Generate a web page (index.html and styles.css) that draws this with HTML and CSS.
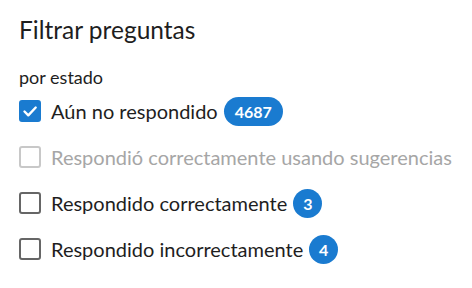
FILE: index.html
```html
<!DOCTYPE html>
<html lang="es">
<head>
<meta charset="utf-8">
<link rel="stylesheet" href="styles.css">
</head>
<body>
<div class="panel">
  <h2 class="title">Filtrar preguntas</h2>
  <div class="group-label">por estado</div>
  <ul class="options">
    <li class="option">
      <span class="box checked"><svg viewBox="0 0 22 22" width="22" height="22"><path d="M5.5 11.5l3.8 3.8 7.4-7.8" fill="none" stroke="#fff" stroke-width="2.4" stroke-linecap="round" stroke-linejoin="round"/></svg></span>
      <span class="label">Aún no respondido</span>
      <span class="badge">4687</span>
    </li>
    <li class="option disabled">
      <span class="box"></span>
      <span class="label">Respondió correctamente usando sugerencias</span>
    </li>
    <li class="option">
      <span class="box"></span>
      <span class="label">Respondido correctamente</span>
      <span class="badge round">3</span>
    </li>
    <li class="option">
      <span class="box"></span>
      <span class="label">Respondido incorrectamente</span>
      <span class="badge round">4</span>
    </li>
  </ul>
</div>
</body>
</html>
```

FILE: styles.css
```css
html, body {
  margin: 0;
  padding: 0;
  background: #fff;
}
body {
  font-family: "Lato", "Liberation Sans", sans-serif;
  color: #1e1e1e;
}
.panel {
  padding: 14px 19px;
}
.title {
  margin: 0;
  font-size: 24.5px;
  font-weight: 400;
  line-height: 32px;
}
.group-label {
  margin-top: 20px;
  font-size: 18px;
  line-height: 22px;
}
.options {
  list-style: none;
  margin: 8px 0 0;
  padding: 0;
  display: flex;
  flex-direction: column;
  gap: 16px;
}
.option {
  display: flex;
  align-items: center;
  height: 30px;
  font-size: 20px;
}
.box {
  width: 22px;
  height: 22px;
  box-sizing: border-box;
  border: 2px solid #666;
  border-radius: 3px;
  margin-right: 10px;
  display: flex;
  align-items: center;
  justify-content: center;
  flex: none;
}
.box.checked {
  background: #1a7bd0;
  border-color: #1a7bd0;
}
.box.checked svg {
  margin: -2px;
}
.disabled {
  color: #a6a6a6;
}
.disabled .box {
  border-color: #c8c8c8;
}
.badge {
  margin-left: 6px;
  background: #1a7bd0;
  color: #fff;
  font-weight: 700;
  font-size: 16px;
  height: 29px;
  line-height: 29px;
  border-radius: 15px;
  padding: 0 11px;
}
.badge.round {
  width: 29px;
  padding: 0;
  text-align: center;
}
```
